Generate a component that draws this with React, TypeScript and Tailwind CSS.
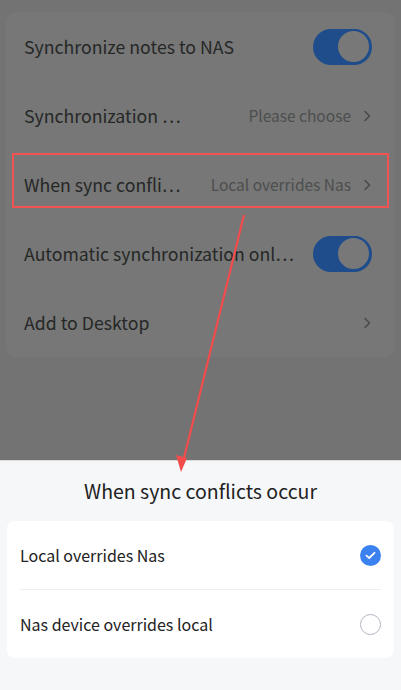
import React from "react";

const Chevron = () => (
  <svg width="10" height="14" viewBox="0 0 10 14" className="shrink-0">
    <path d="M3 2.5 L7.5 7 L3 11.5" fill="none" stroke="#4a4b4b" strokeWidth="1.6" strokeLinecap="round" strokeLinejoin="round" />
  </svg>
);

const Toggle = () => (
  <div className="w-[59px] h-[36px] rounded-full bg-[#1f4d8c] flex items-center justify-end pr-[1px] shrink-0">
    <div className="w-[35px] h-[35px] rounded-full bg-[#777877] border-[2px] border-[#1f4d8c]" />
  </div>
);

interface RowProps {
  label: string;
  value?: string;
  toggle?: boolean;
  chevron?: boolean;
}

const Row: React.FC<RowProps> = ({ label, value, toggle, chevron }) => (
  <div className="h-[69px] flex items-center pl-[18px] pr-[23px] gap-[11px]">
    <span className="flex-1 min-w-0 truncate text-[17.7px] text-[#262727]">{label}</span>
    {value && <span className="text-[15.5px] text-[#4d4e4e] shrink-0">{value}</span>}
    {chevron && <Chevron />}
    {toggle && <Toggle />}
  </div>
);

const Option: React.FC<{ label: string; checked?: boolean }> = ({ label, checked }) => (
  <div className="h-[68px] flex items-center justify-between pl-[13px] pr-[13px]">
    <span className="text-[16px] text-[#222222]">{label}</span>
    {checked ? (
      <div className="w-[21px] h-[21px] rounded-full bg-[#3b82f0] flex items-center justify-center">
        <svg width="11" height="9" viewBox="0 0 11 9">
          <path d="M1.5 4.6 L4.2 7 L9.5 1.8" fill="none" stroke="#ffffff" strokeWidth="1.8" strokeLinecap="round" strokeLinejoin="round" />
        </svg>
      </div>
    ) : (
      <div className="w-[21px] h-[21px] rounded-full border-[1.5px] border-[#b3b6c0]" />
    )}
  </div>
);

export default function App() {
  return (
    <div
      className="relative w-[401px] h-[690px] overflow-hidden bg-[#727372]"
      style={{ fontFamily: '"Noto Sans CJK SC", "Noto Sans", sans-serif' }}
    >
      <div className="h-[460px] pt-[12px] px-[6px]">
        <div className="rounded-[10px] bg-[#767776]">
          <Row label="Synchronize notes to NAS" toggle />
          <Row label="Synchronization ⋯" value="Please choose" chevron />
          <Row label="When sync confli⋯" value="Local overrides Nas" chevron />
          <Row label="Automatic synchronization onl⋯" toggle />
          <Row label="Add to Desktop" chevron />
        </div>
      </div>

      <div className="h-[230px] bg-[#f6f7f9] border-t border-[#d9dadc] px-[7px]">
        <div className="h-[60px] flex items-center justify-center">
          <span className="text-[19.5px] text-[#222222]">When sync conflicts occur</span>
        </div>
        <div className="rounded-[8px] bg-white">
          <Option label="Local overrides Nas" checked />
          <div className="mx-[13px] h-px bg-[#eeeff1]" />
          <Option label="Nas device overrides local" />
        </div>
      </div>

      <div className="absolute left-[12px] top-[153px] w-[377px] h-[55px] border-2 border-[#f25252]" />

      <svg className="absolute left-0 top-0" width="401" height="690" viewBox="0 0 401 690">
        <line x1="244" y1="215" x2="183" y2="462" stroke="#f24c4c" strokeWidth="2.2" />
        <path d="M181 472 L176 455 L187 458 Z" fill="#f24c4c" />
      </svg>
    </div>
  );
}
